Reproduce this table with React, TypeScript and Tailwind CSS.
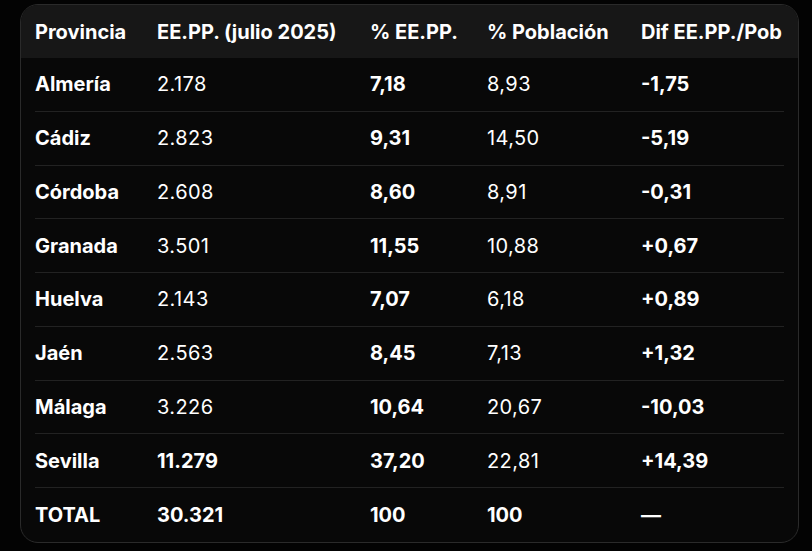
import React from "react";

type Row = { p: string; e: string; pe: string; pop: string; d: string; eBold?: boolean; all?: boolean };

const rows: Row[] = [
  { p: "Almería", e: "2.178", pe: "7,18", pop: "8,93", d: "-1,75" },
  { p: "Cádiz", e: "2.823", pe: "9,31", pop: "14,50", d: "-5,19" },
  { p: "Córdoba", e: "2.608", pe: "8,60", pop: "8,91", d: "-0,31" },
  { p: "Granada", e: "3.501", pe: "11,55", pop: "10,88", d: "+0,67" },
  { p: "Huelva", e: "2.143", pe: "7,07", pop: "6,18", d: "+0,89" },
  { p: "Jaén", e: "2.563", pe: "8,45", pop: "7,13", d: "+1,32" },
  { p: "Málaga", e: "3.226", pe: "10,64", pop: "20,67", d: "-10,03" },
  { p: "Sevilla", e: "11.279", pe: "37,20", pop: "22,81", d: "+14,39", eBold: true },
  { p: "TOTAL", e: "30.321", pe: "100", pop: "100", d: "—", all: true },
];

const grid = "grid grid-cols-[122px_213px_117px_154px_1fr] items-center";

export default function App() {
  return (
    <div
      className="w-[812px] h-[551px] bg-[#030303] pt-[4px] pl-[20px]"
      style={{ fontFamily: "Inter, 'Noto Sans', sans-serif" }}
    >
      <div className="w-[779px] h-[539px] rounded-[18px] border border-[#2a2a2a] bg-[#080808] overflow-hidden text-[20px] text-white">
        <div className="bg-[#171717] h-[53px] px-[14px]">
          <div className={`${grid} h-full font-bold`}>
            <div>Provincia</div>
            <div>EE.PP. (julio 2025)</div>
            <div>% EE.PP.</div>
            <div>% Población</div>
            <div>Dif EE.PP./Pob</div>
          </div>
        </div>
        <div className="px-[14px]">
          {rows.map((r, i) => (
            <div
              key={r.p}
              className={`${grid} h-[53.75px] ${i < rows.length - 1 ? "border-b border-[#222222]" : ""}`}
            >
              <div className="font-bold">{r.p}</div>
              <div className={r.eBold || r.all ? "font-bold" : "font-normal tracking-[0.02em]"}>{r.e}</div>
              <div className="font-bold">{r.pe}</div>
              <div className={r.all ? "font-bold" : "font-normal tracking-[0.02em]"}>{r.pop}</div>
              <div className="font-bold">{r.d}</div>
            </div>
          ))}
        </div>
      </div>
    </div>
  );
}
